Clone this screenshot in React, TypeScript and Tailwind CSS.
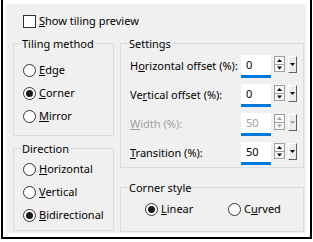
import React from 'react';

const font = { fontFamily: '"Noto Sans", "Open Sans", sans-serif' };

const Radio = ({ checked }: { checked?: boolean }) => (
  <span className="w-[13px] h-[13px] rounded-full border border-[#333333] bg-white flex items-center justify-center shrink-0">
    {checked && <span className="w-[7px] h-[7px] rounded-full bg-[#1a1a1a]" />}
  </span>
);

const RadioRow = ({ checked, k, rest }: { checked?: boolean; k: string; rest: string }) => (
  <div className="h-[23px] flex items-center gap-[3px]">
    <Radio checked={checked} />
    <span>
      <u>{k}</u>
      {rest}
    </span>
  </div>
);

// windows style group box: label sits on the top border
const Group = ({ title, className, children }: { title: string; className: string; children: React.ReactNode }) => (
  <div className={`border border-[#dcdcdc] ${className}`}>
    <div className="-mt-[8px] ml-[7px] px-[1px] w-fit h-[16px] leading-[16px] bg-[#f0f0f0]">{title}</div>
    {children}
  </div>
);

const SpinField = ({ value, disabled }: { value: string; disabled?: boolean }) => {
  const arrow = disabled ? 'text-[#a0a0a0]' : 'text-black';
  return (
    <div className="flex items-start gap-[3px]">
      <div className={`w-[30px] h-[23px] bg-white border-b-[3px] border-[#0078d7] flex items-center pl-[5px] ${disabled ? 'text-[#a0a0a0]' : ''}`}>
        {value}
      </div>
      <div className={`w-[11px] h-[16px] mt-[1px] border border-[#a0a0a0] bg-[#f7f7f7] flex flex-col ${arrow}`}>
        <svg width="9" height="7" viewBox="0 0 9 7" className="fill-current">
          <path d="M2 5 L4.5 2 L7 5 Z" />
        </svg>
        <div className="h-px bg-[#a0a0a0]" />
        <svg width="9" height="6" viewBox="0 0 9 6" className="fill-current">
          <path d="M2 1.5 L7 1.5 L4.5 4.5 Z" />
        </svg>
      </div>
      <div className={`w-[9px] h-[17px] mt-[1px] border border-white border-r-[#606060] border-b-[#606060] bg-[#ececec] flex items-center justify-center ${arrow}`}>
        <svg width="7" height="5" viewBox="0 0 7 5" className="fill-current">
          <path d="M1 1 L6 1 L3.5 4 Z" />
        </svg>
      </div>
    </div>
  );
};

const SettingRow = ({ k, before, rest, value, disabled }: { k: string; before?: string; rest: string; value: string; disabled?: boolean }) => (
  <div className="h-[23px] flex items-center">
    <span className={`w-[111px] whitespace-nowrap ${disabled ? 'text-[#a0a0a0]' : ''}`}>
      {before}
      <u>{k}</u>
      {rest}
    </span>
    <SpinField value={value} disabled={disabled} />
  </div>
);

export default function App() {
  return (
    <div className="w-[313px] h-[242px] bg-white pl-[1px] text-[11px] text-black" style={font}>
      <div className="w-[311px] h-[239px] border-x-2 border-b-2 border-black pt-[4px] pl-[3px]">
        <div className="w-[300px] h-[229px] bg-[#f0f0f0] pl-[7px]">
          <div className="h-[16px] pt-[9px] box-content ml-[10px] flex items-center gap-[3px]">
            <span className="w-[13px] h-[13px] border border-[#333333] bg-white shrink-0" />
            <span>
              <u>S</u>how tiling preview
            </span>
          </div>
          <div className="flex gap-[6px] mt-[14px]">
            <div className="w-[101px] flex flex-col">
              <Group title="Tiling method" className="h-[93px]">
                <div className="pt-[7px] pl-[9px]">
                  <RadioRow k="E" rest="dge" />
                  <RadioRow checked k="C" rest="orner" />
                  <RadioRow k="M" rest="irror" />
                </div>
              </Group>
              <Group title="Direction" className="h-[83px] mt-[12px]">
                <div className="pt-[1px] pl-[9px]">
                  <RadioRow k="H" rest="orizontal" />
                  <RadioRow k="V" rest="ertical" />
                  <RadioRow checked k="B" rest="idirectional" />
                </div>
              </Group>
            </div>
            <div className="w-[184px] flex flex-col">
              <Group title="Settings" className="h-[125px]">
                <div className="pt-[3px] pl-[9px] flex flex-col gap-[6px]">
                  <SettingRow before="H" k="o" rest="rizontal offset (%):" value="0" />
                  <SettingRow before="Ve" k="r" rest="tical offset (%):" value="0" />
                  <SettingRow k="W" rest="idth (%):" value="50" disabled />
                  <SettingRow k="T" rest="ransition (%):" value="50" />
                </div>
              </Group>
              <Group title="Corner style" className="h-[45px] mt-[19px]">
                <div className="pt-[2px] pl-[24px] flex">
                  <div className="w-[83px]">
                    <RadioRow checked k="L" rest="inear" />
                  </div>
                  <div className="h-[23px] flex items-center gap-[3px]">
                    <Radio />
                    <span>
                      C<u>u</u>rved
                    </span>
                  </div>
                </div>
              </Group>
            </div>
          </div>
        </div>
      </div>
    </div>
  );
}
